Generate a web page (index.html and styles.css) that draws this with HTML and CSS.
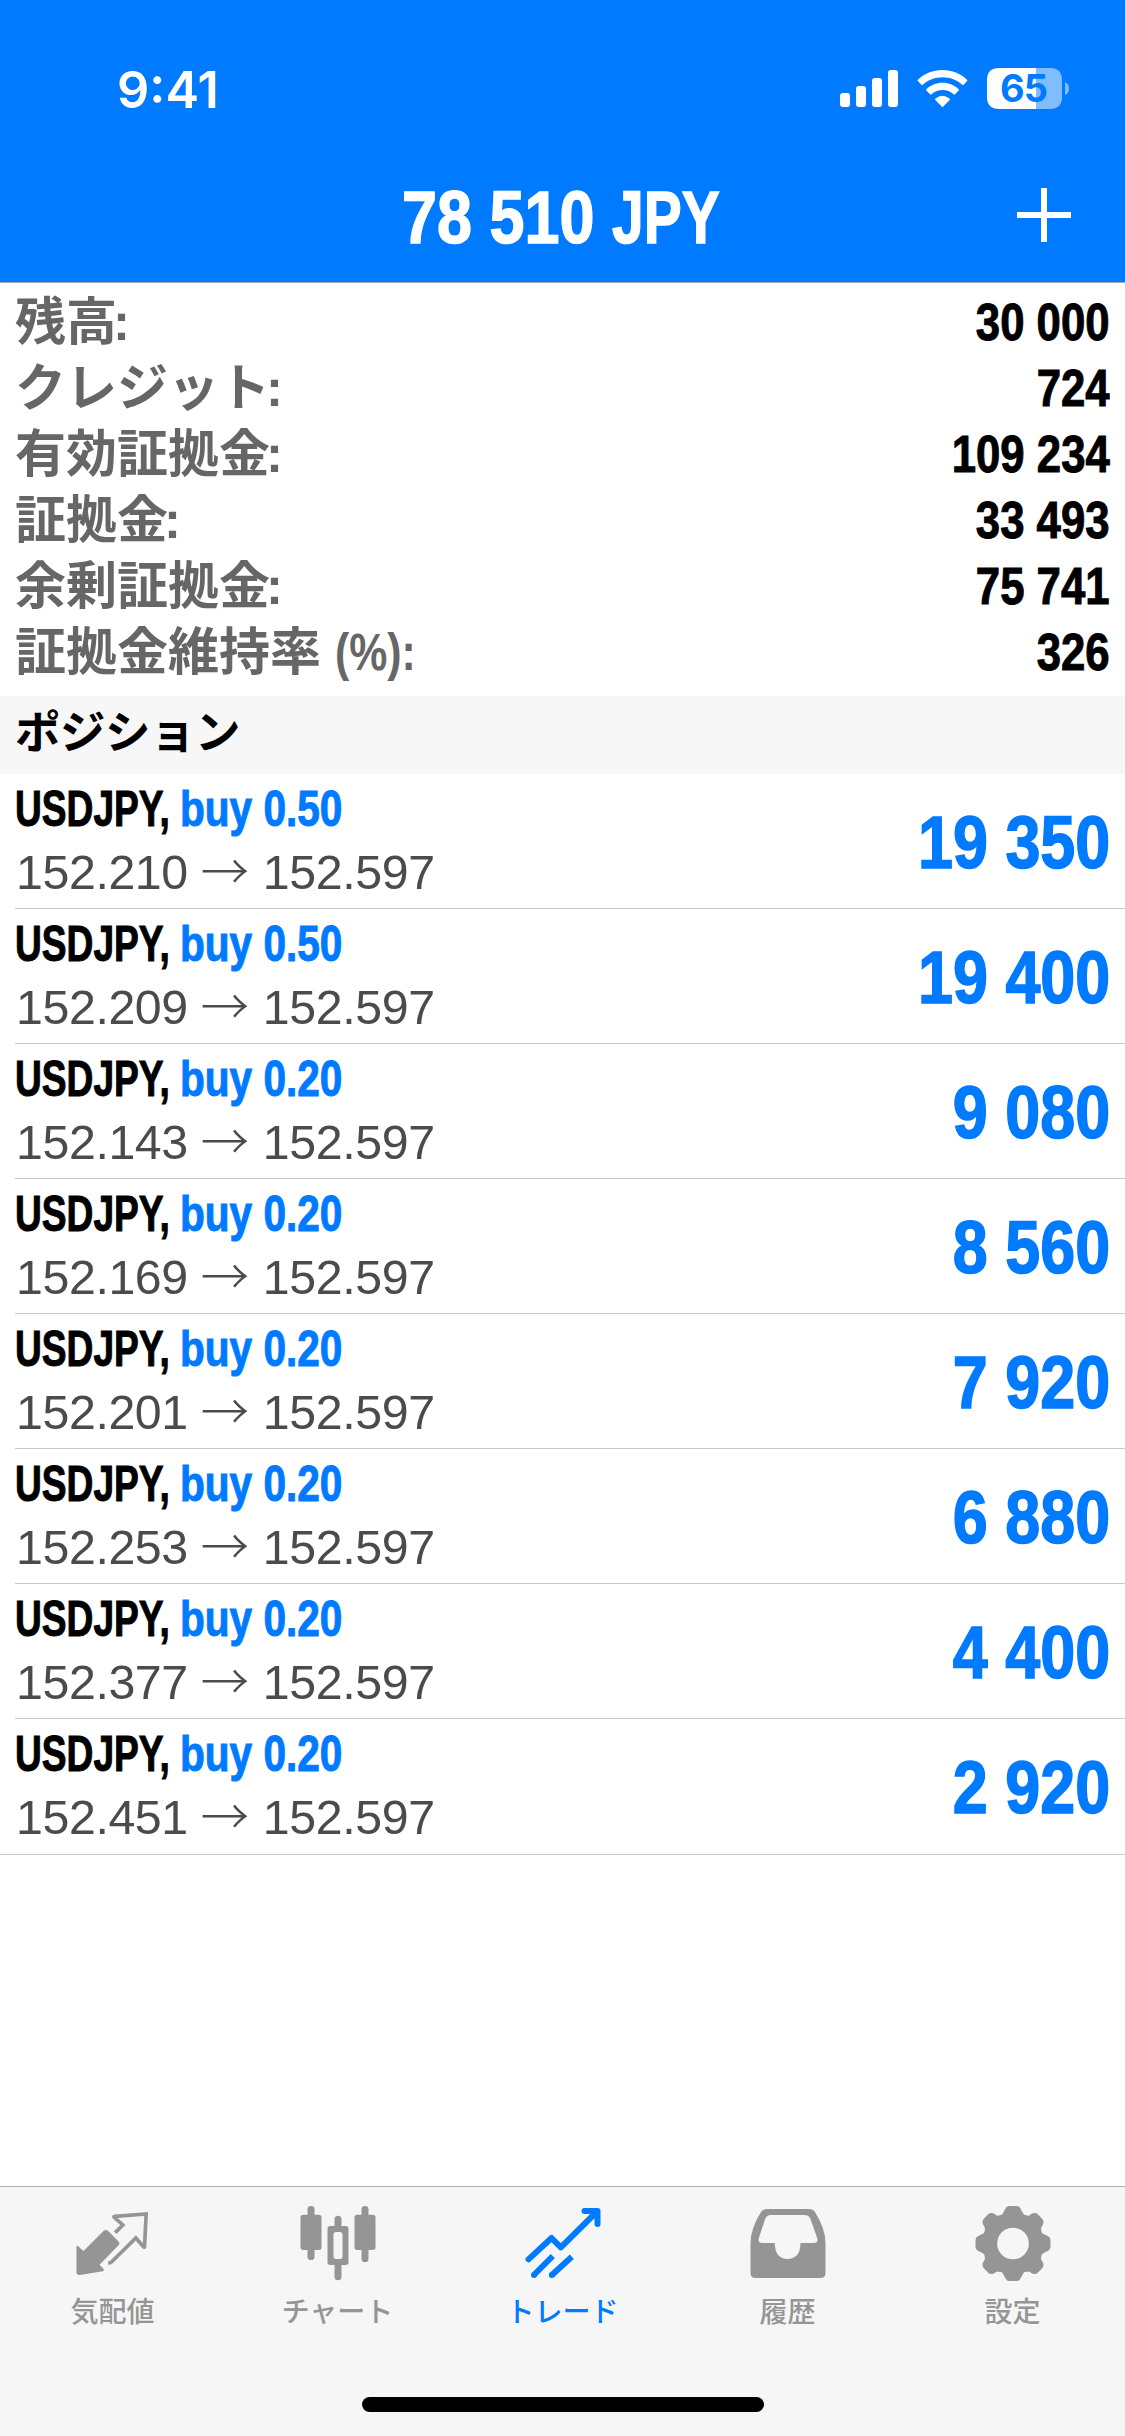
FILE: index.html
```html
<!DOCTYPE html>
<html lang="ja">
<head>
<meta charset="utf-8">
<title>トレード</title>
<link rel="stylesheet" href="styles.css">
</head>
<body>
<div class="app">
  <header class="header">
    <div class="status">
      <span class="time">9:41</span>
      <svg class="status-icons" viewBox="840 58 230 62">
        <g fill="#fff">
          <rect x="840" y="93" width="10" height="14" rx="3"/>
          <rect x="856" y="86" width="10" height="21" rx="3"/>
          <rect x="872" y="78" width="10" height="29" rx="3"/>
          <rect x="888" y="70" width="10" height="37" rx="3"/>
          <path d="M942.500 107.300L935.300 100Q934.700 99.200 935.500 98.500Q942.500 92.900 949.500 98.500Q950.300 99.200 949.700 100Z"/>
          <path d="M942.500 82.700C948.800 82.700 954.600 85.100 958.700 89.200Q959.300 89.900 958.700 90.500L955 94.300Q954.300 94.900 953.600 94.300C950.600 91.600 946.700 90.100 942.500 90.100C938.300 90.100 934.400 91.600 931.400 94.300Q930.700 94.900 930 94.300L926.300 90.500Q925.700 89.900 926.300 89.200C930.400 85.100 936.200 82.700 942.500 82.700Z"/>
          <path d="M942.500 70C952 70 960.700 73.600 967.100 79.700Q967.800 80.400 967.100 81.100L963.600 84.700Q962.900 85.300 962.200 84.700C957 79.900 950 77.200 942.500 77.200C935 77.200 928 79.900 922.800 84.700Q922.100 85.300 921.400 84.700L917.900 81.100Q917.200 80.400 917.900 79.700C924.300 73.600 933 70 942.500 70Z"/>
          <path d="M1036 68H999Q987 68 987 80V97Q987 109 999 109H1036Z"/>
          <path opacity=".5" d="M1036 68H1050Q1062 68 1062 80V97Q1062 109 1050 109H1036Z"/>
          <path opacity=".5" d="M1065 82.300Q1069 84 1069 88.700Q1069 93.400 1065 95Z"/>
        </g>
        <text class="battery" x="1023.500" y="102.300" text-anchor="middle">65</text>
      </svg>
    </div>
    <div class="nav">
      <h1 class="title"><span class="title-sum">78 510</span><span class="title-cur">JPY</span></h1>
      <svg class="plus" viewBox="0 0 54 54"><path d="M24 0h6v24h24v6H30v24h-6V30H0v-6h24z" fill="#fff"/></svg>
    </div>
  </header>

  <section class="summary">
    <div class="sum-row"><span class="label">残高<span class="colon">:</span></span><span class="value">30 000</span></div>
    <div class="sum-row"><span class="label">クレジット<span class="colon">:</span></span><span class="value">724</span></div>
    <div class="sum-row"><span class="label">有効証拠金<span class="colon">:</span></span><span class="value">109 234</span></div>
    <div class="sum-row"><span class="label">証拠金<span class="colon">:</span></span><span class="value">33 493</span></div>
    <div class="sum-row"><span class="label">余剰証拠金<span class="colon">:</span></span><span class="value">75 741</span></div>
    <div class="sum-row"><span class="label">証拠金維持率 <span class="pct">(%):</span></span><span class="value">326</span></div>
  </section>

  <h2 class="section">ポジション</h2>

  <ul class="list">
    <li class="row"><div class="info"><div class="line1"><span class="sym">USDJPY,</span><span class="side">buy 0.50</span></div><div class="line2">152.210 <span class="arrow">→</span> 152.597</div></div><span class="profit">19 350</span></li>
    <li class="row"><div class="info"><div class="line1"><span class="sym">USDJPY,</span><span class="side">buy 0.50</span></div><div class="line2">152.209 <span class="arrow">→</span> 152.597</div></div><span class="profit">19 400</span></li>
    <li class="row"><div class="info"><div class="line1"><span class="sym">USDJPY,</span><span class="side">buy 0.20</span></div><div class="line2">152.143 <span class="arrow">→</span> 152.597</div></div><span class="profit">9 080</span></li>
    <li class="row"><div class="info"><div class="line1"><span class="sym">USDJPY,</span><span class="side">buy 0.20</span></div><div class="line2">152.169 <span class="arrow">→</span> 152.597</div></div><span class="profit">8 560</span></li>
    <li class="row"><div class="info"><div class="line1"><span class="sym">USDJPY,</span><span class="side">buy 0.20</span></div><div class="line2">152.201 <span class="arrow">→</span> 152.597</div></div><span class="profit">7 920</span></li>
    <li class="row"><div class="info"><div class="line1"><span class="sym">USDJPY,</span><span class="side">buy 0.20</span></div><div class="line2">152.253 <span class="arrow">→</span> 152.597</div></div><span class="profit">6 880</span></li>
    <li class="row"><div class="info"><div class="line1"><span class="sym">USDJPY,</span><span class="side">buy 0.20</span></div><div class="line2">152.377 <span class="arrow">→</span> 152.597</div></div><span class="profit">4 400</span></li>
    <li class="row"><div class="info"><div class="line1"><span class="sym">USDJPY,</span><span class="side">buy 0.20</span></div><div class="line2">152.451 <span class="arrow">→</span> 152.597</div></div><span class="profit">2 920</span></li>
  </ul>

  <footer class="tabbar">
    <nav class="tabs">
      <div class="tab">
        <svg class="icon" viewBox="220.5 72 234 234">
          <path fill="currentColor" d="M228 200Q228 196 232 198L249 213L309 153Q316 147 323 153L355 185Q359 190 355 195L297 254L309 266Q313 271 307 274L238 285Q228 286 228 277Z"/>
          <path fill="none" stroke="currentColor" stroke-width="11" stroke-linejoin="miter" d="M344 158L367 135L341 112Q339 109 343 109L437 102L432 201Q431 203 429 200L406 174L333 246Q330 249 323 249"/>
        </svg>
        <span>気配値</span>
      </div>
      <div class="tab">
        <svg class="icon" viewBox="895.5 72 234 234">
          <g fill="currentColor">
            <rect x="921" y="78" width="21" height="162" rx="10"/><rect x="900" y="104" width="63" height="106" rx="8"/>
            <rect x="1083" y="78" width="21" height="168" rx="10"/><rect x="1062" y="104" width="63" height="106" rx="8"/>
            <path d="M1002 140V118a10.500 10.500 0 0 1 21 0V140zM1002 253V290a10.500 10.500 0 0 0 21 0V253z"/>
            <path fill-rule="evenodd" d="M989 138h47q8 0 8 8v101q0 8-8 8h-47q-8 0-8-8v-101q0-8 8-8zM1007 156q-8 0-8 8v65q0 8 8 8h11q8 0 8-8v-65q0-8-8-8z"/>
          </g>
        </svg>
        <span>チャート</span>
      </div>
      <div class="tab active">
        <svg class="icon" viewBox="370.5 72 234 234">
          <g fill="none" stroke="currentColor" stroke-width="18">
            <path stroke-linecap="round" stroke-linejoin="round" d="M384 238L453 174L481 202L588 96M552 93H591V132"/>
            <path d="M457 228L400 285M514 230L454 285"/>
          </g>
          <circle cx="400.500" cy="285" r="9" fill="currentColor"/><circle cx="454" cy="285" r="9" fill="currentColor"/>
        </svg>
        <span>トレード</span>
      </div>
      <div class="tab">
        <svg class="icon" viewBox="85.5 72 234 234">
          <path fill="currentColor" fill-rule="evenodd" d="M139 87H266Q277 87 284 97Q315 147 315 190V279Q315 294 300 294H105Q90 294 90 279V190Q90 147 121 97Q128 87 139 87ZM151 105Q139 105 134 117L115 174Q111 189 125 189H163C163 222 178 237 201 237S240 222 240 189H280Q294 189 290 174L270 117Q265 105 252 105Z"/>
        </svg>
        <span>履歴</span>
      </div>
      <div class="tab">
        <svg class="icon" viewBox="760.5 72 234 234">
          <path fill="currentColor" fill-rule="evenodd" d="M866 78H889Q896 78 899 84L906 97Q908 102 912 104L923 107Q928 108 931 103Q936 99 943 99Q948 99 952 103L965 116Q969 120 969 126Q969 133 965 137Q961 142 962 148L963 155Q965 161 971 163L983 169Q990 173 990 180V201Q990 208 983 212L971 218Q965 220 963 226L962 233Q961 239 965 244Q969 248 969 255Q969 261 965 265L952 278Q948 282 943 282Q936 282 931 278Q928 274 923 275L912 276Q908 279 906 284L899 297Q896 303 889 303H866Q859 303 856 297L849 284Q847 279 843 276L832 275Q827 274 824 278Q819 282 812 282Q807 282 803 278L790 265Q786 261 786 255Q786 248 790 244Q794 239 793 233L792 226Q790 220 784 218L772 212Q765 208 765 201V180Q765 173 772 169L784 163Q790 161 792 155L793 148Q794 142 790 137Q786 133 786 126Q786 120 790 116L803 103Q807 99 812 99Q819 99 824 103Q827 108 832 107L843 104Q847 102 849 97L856 84Q859 78 866 78ZM877.500 143A47.500 47.500 0 1 0 877.500 238A47.500 47.500 0 1 0 877.500 143Z"/>
        </svg>
        <span>設定</span>
      </div>
    </nav>
    <div class="home"></div>
  </footer>
</div>
</body>
</html>
```
FILE: styles.css
```css
* { box-sizing: border-box; margin: 0; padding: 0; }
body {
  width: 1125px;
  background: #fff;
  font-family: "Liberation Sans", "Noto Sans CJK JP", sans-serif;
  color: #000;
}
.app { display: flex; flex-direction: column; height: 2436px; overflow: hidden; }

.header { height: 283px; background: #007aff; border-bottom: 1px solid #a6aaae; color: #fff; }
.status { display: flex; justify-content: space-between; height: 151px; padding: 0 55px 0 117px; }
.time { font: 600 50.5px/60px Inter, sans-serif; padding-top: 60px; }
.status-icons { width: 230px; height: 62px; margin-top: 58px; }
.battery { font: 700 38px Inter, sans-serif; fill: #007aff; letter-spacing: -1px; }
.nav { display: flex; justify-content: space-between; align-items: flex-start; padding: 0 54px 0 402px; height: 131px; }
.title { display: flex; font-size: 74px; line-height: 133px; white-space: nowrap; -webkit-text-stroke: 1.5px currentColor; }
.title span { transform-origin: left; }
.title-sum { width: 210px; transform: scaleX(.85); }
.title-cur { width: 108px; transform: scaleX(.77); }
.plus { width: 54px; height: 54px; margin-top: 37px; }

.summary { height: 413px; padding: 6px 15px 0 15px; }
.sum-row { display: flex; justify-content: space-between; height: 66px; line-height: 66px; white-space: nowrap; }
.label { padding-top: 1px; font-size: 51px; font-weight: 700; color: #666; }
.colon { margin-left: -4px; }
.pct { display: inline-block; transform: scaleX(.84); transform-origin: left; }
.value { font-size: 52.5px; font-weight: 700; transform: scaleX(.833); transform-origin: right; -webkit-text-stroke: 1px currentColor; }

.section { height: 78px; padding-left: 15px; background: #f7f7f7; font-size: 45.5px; line-height: 76px; letter-spacing: -0.5px; }

.list { list-style: none; border-bottom: 1px solid #c8c7cc; height: 1081px; }
.row {
  display: flex;
  justify-content: space-between;
  height: 135px;
  margin-left: 15px;
  padding-right: 15px;
  border-bottom: 1px solid #c8c7cc;
  white-space: nowrap;
}
.row:last-child { border-bottom: 0; }
.info { padding-top: 4px; }
.line1 { display: flex; font-size: 49.5px; font-weight: 700; line-height: 61px; -webkit-text-stroke: 1px currentColor; }
.line1 span { transform-origin: left; }
.sym { width: 165px; transform: scaleX(.75); }
.side { width: 165px; color: #007aff; transform: scaleX(.82); }
.line2 { padding-left: 1px; font-size: 48.3px; line-height: 66px; letter-spacing: -0.4px; color: #4a4a4f; }
.arrow { display: inline-block; width: 49px; font-family: "Noto Sans CJK JP", sans-serif; font-weight: 300; line-height: 1; }
.profit { padding-top: 2px; font-size: 74px; font-weight: 700; line-height: 134px; color: #007aff; transform: scaleX(.85); transform-origin: right; -webkit-text-stroke: 1.5px currentColor; }

.tabbar { display: flex; flex-direction: column; align-items: center; height: 250px; margin-top: auto; border-top: 1px solid #b0b0b0; background: #f6f6f6; }
.tabs { display: flex; width: 100%; height: 210px; padding-top: 17px; }
.tab { flex: 1; display: flex; flex-direction: column; align-items: center; color: #959595; font: 500 28px/40px "Noto Sans CJK JP", sans-serif; }
.tab span { margin-top: 8px; }
.active { color: #007aff; }
.icon { width: 78px; height: 78px; }
.home { width: 402px; height: 15px; border-radius: 8px; background: #000; }
```
